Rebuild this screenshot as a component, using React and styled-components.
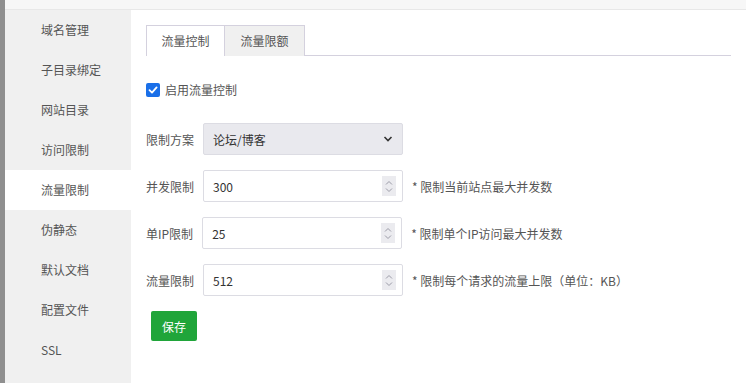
import React from 'react';
import styled, { createGlobalStyle } from 'styled-components';

const GlobalStyle = createGlobalStyle`
    html, body {
        margin: 0;
        padding: 0;
        background: #fff;
    }
    body {
        font-family: "Noto Sans CJK SC", "Noto Sans", sans-serif;
        font-size: 12px;
        color: #555;
    }
`;

const StyledPage = styled.div`
    display: flex;
    width: 746px;
    height: 383px;
    overflow: hidden;
`;

const StyledEdge = styled.div`
    width: 5px;
    flex-shrink: 0;
    background: #8f8f8f;
`;

const StyledMain = styled.div`
    display: flex;
    flex-direction: column;
    flex: 1;
`;

const StyledTopBar = styled.div`
    height: 9px;
    background: #f7f7f7;
    border-bottom: 1px solid #e8e8e8;
`;

const StyledBody = styled.div`
    display: flex;
    flex: 1;
`;

const StyledSidebar = styled.ul`
    width: 126px;
    margin: 0;
    padding: 0;
    list-style: none;
    background: #f0f0f0;
`;

const StyledNavItem = styled.li`
    height: 40px;
    line-height: 40px;
    padding-left: 36px;
    color: #555;
    background: ${props => (props.active ? '#fff' : 'transparent')};
`;

const StyledContent = styled.div`
    flex: 1;
    padding: 15px;
`;

const StyledTabs = styled.div`
    display: flex;
    border-bottom: 1px solid #d4d1de;
`;

const StyledTab = styled.div`
    width: ${props => props.width}px;
    height: 31px;
    line-height: 30px;
    padding-bottom: 1px;
    text-align: center;
    box-sizing: border-box;
    border: 1px solid #d4d1de;
    border-bottom: none;
    border-left: ${props => (props.first ? '1px solid #d4d1de' : 'none')};
    background: ${props => (props.active ? '#fff' : '#f0f0f0')};
    color: #555;
    margin-bottom: -1px;
`;

const StyledCheckRow = styled.label`
    display: flex;
    align-items: center;
    gap: 5px;
    height: 14px;
    line-height: 14px;
    margin-top: 27px;
    color: #555;
`;

const StyledCheckBox = styled.span`
    display: flex;
    align-items: center;
    justify-content: center;
    width: 14px;
    height: 14px;
    border-radius: 2px;
    background: #1a6fe8;
`;

const StyledForm = styled.div`
    display: flex;
    flex-direction: column;
    gap: 15px;
    margin-top: 26px;
`;

const StyledRow = styled.div`
    display: flex;
    align-items: center;
`;

const StyledLabel = styled.span`
    margin-right: 9px;
    color: #555;
`;

const StyledField = styled.div`
    display: flex;
    align-items: center;
    justify-content: space-between;
    box-sizing: border-box;
    width: 200px;
    height: 32px;
    padding: 0 6px 0 9px;
    border: 1px solid #dcdce3;
    border-radius: 2px;
    background: ${props => (props.select ? '#e9e9ee' : '#fff')};
    color: #333;
`;

const StyledSpin = styled.span`
    display: flex;
    flex-direction: column;
    align-items: center;
    justify-content: center;
    gap: 3px;
    width: 14px;
    height: 20px;
    background: #ebebef;
`;

const StyledHelp = styled.span`
    margin-left: 9px;
    color: #555;
`;

const StyledButton = styled.button`
    width: 46px;
    height: 30px;
    margin-left: 5px;
    border: none;
    border-radius: 2px;
    background: #20a53a;
    color: #fff;
    font-family: inherit;
    font-size: 12px;
    padding: 0;
`;

const navItems = ['域名管理', '子目录绑定', '网站目录', '访问限制', '流量限制', '伪静态', '默认文档', '配置文件', 'SSL'];

const fields = [
    { label: '并发限制', value: '300', help: '* 限制当前站点最大并发数' },
    { label: '单IP限制', value: '25', help: '* 限制单个IP访问最大并发数' },
    { label: '流量限制', value: '512', help: '* 限制每个请求的流量上限（单位：KB）' }
];

const Spinner = () => (
    <StyledSpin>
        <svg width="8" height="5" viewBox="0 0 8 5">
            <path d="M1 4.5 L4 1.5 L7 4.5" fill="none" stroke="#9a9aa6" strokeWidth="1" />
        </svg>
        <svg width="8" height="5" viewBox="0 0 8 5">
            <path d="M1 0.5 L4 3.5 L7 0.5" fill="none" stroke="#9a9aa6" strokeWidth="1" />
        </svg>
    </StyledSpin>
);

export default function App() {
    return (
        <StyledPage>
            <GlobalStyle />
            <StyledEdge />
            <StyledMain>
                <StyledTopBar />
                <StyledBody>
                    <StyledSidebar>
                        {navItems.map(item => (
                            <StyledNavItem key={item} active={item === '流量限制'}>{item}</StyledNavItem>
                        ))}
                    </StyledSidebar>
                    <StyledContent>
                        <StyledTabs>
                            <StyledTab first active width={79}>流量控制</StyledTab>
                            <StyledTab width={80}>流量限额</StyledTab>
                        </StyledTabs>
                        <StyledCheckRow>
                            <StyledCheckBox>
                                <svg width="10" height="10" viewBox="0 0 10 10">
                                    <path d="M1.5 5.2 L4 7.6 L8.6 2.4" fill="none" stroke="#fff" strokeWidth="1.8" strokeLinecap="round" strokeLinejoin="round" />
                                </svg>
                            </StyledCheckBox>
                            启用流量控制
                        </StyledCheckRow>
                        <StyledForm>
                            <StyledRow>
                                <StyledLabel>限制方案</StyledLabel>
                                <StyledField select>
                                    <span>论坛/博客</span>
                                    <svg width="10" height="6" viewBox="0 0 10 6" style={{ marginRight: 3 }}>
                                        <path d="M1.5 1 L5 4.5 L8.5 1" fill="none" stroke="#333" strokeWidth="1.6" />
                                    </svg>
                                </StyledField>
                            </StyledRow>
                            {fields.map(f => (
                                <StyledRow key={f.label}>
                                    <StyledLabel>{f.label}</StyledLabel>
                                    <StyledField>
                                        <span>{f.value}</span>
                                        <Spinner />
                                    </StyledField>
                                    <StyledHelp>{f.help}</StyledHelp>
                                </StyledRow>
                            ))}
                            <div>
                                <StyledButton>保存</StyledButton>
                            </div>
                        </StyledForm>
                    </StyledContent>
                </StyledBody>
            </StyledMain>
        </StyledPage>
    );
}
